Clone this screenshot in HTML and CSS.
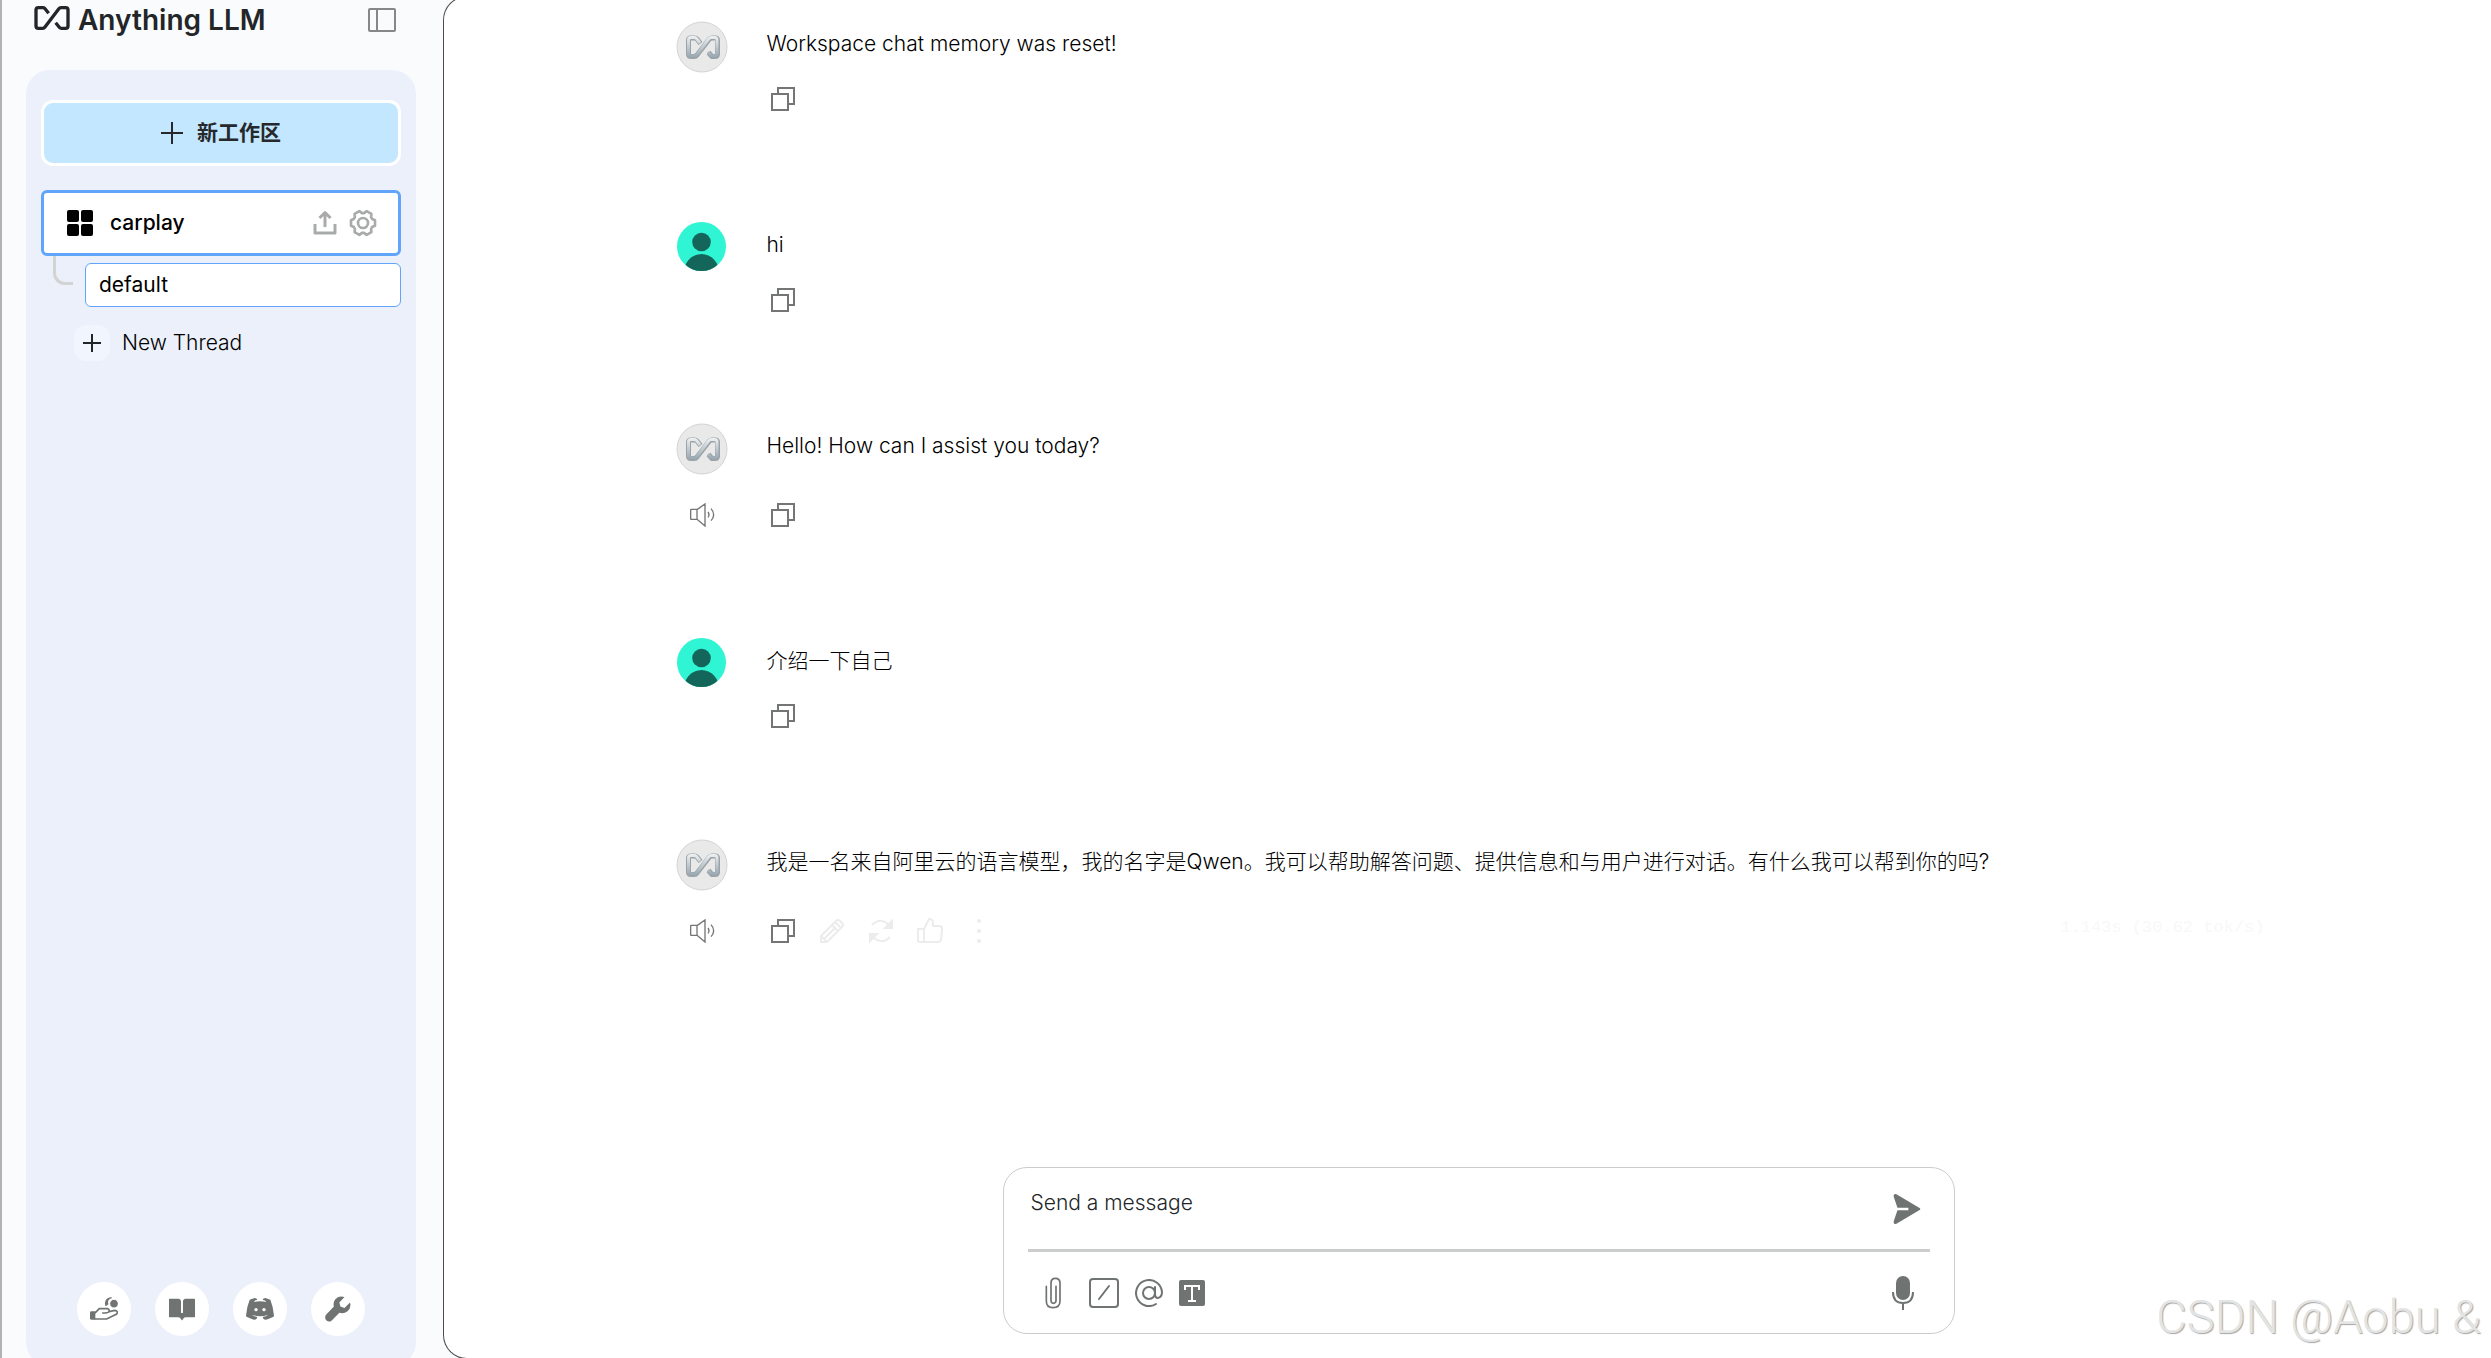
FILE: index.html
```html
<!DOCTYPE html>
<html lang="zh-CN">
<head>
<meta charset="utf-8">
<meta name="viewport" content="width=device-width, initial-scale=1">
<title>Anything LLM</title>
<link rel="stylesheet" href="styles.css">
</head>
<body>
<svg class="defs" aria-hidden="true">
  <defs>
    <linearGradient id="metal" gradientUnits="userSpaceOnUse" x1="0" y1="15" x2="0" y2="37"><stop offset="0" stop-color="#eef1f2"/><stop offset="1" stop-color="#93a5af"/></linearGradient>
    <symbol id="mark" viewBox="0 0 108 72"><path d="M44 22 32 7Q30 5 27 5H13Q6 5 6 12V60Q6 67 13 67H26Q30 67 33 63L74 9Q77 5 81 5H95Q102 5 102 12V60Q102 67 95 67H82Q79 67 77 65L65 50" fill="none" stroke-width="10"/></symbol>
    <symbol id="copy" viewBox="0 0 32 32"><path d="M11 11V5H27V21H21M5 11H21V27H5Z" fill="none" stroke="currentColor" stroke-width="2"/></symbol>
    <symbol id="speaker" viewBox="0 0 78 72"><path d="M5 20Q5 19 6 19H24V49H6Q5 49 5 48ZM24 20 48 3V69L24 49M57 27Q63 35 57 43M66 17Q82 35 66 53" fill="none" stroke="currentColor" stroke-width="4"/></symbol>
    <symbol id="bot" viewBox="0 0 52 52"><circle cx="26" cy="26" r="25" fill="#e9e9e9" stroke="#d4d4d4"/><g fill="none" stroke-linejoin="round"><path d="M24.500 22.500 21 18Q20 17 18.500 17H15Q12.500 17 12.500 19.500V33Q12.500 35.500 15 35.500H18Q20 35.500 21 34L33 18.500Q34 17 36 17H39Q41.500 17 41.500 19.500V33Q41.500 35.500 39 35.500H36L32.500 31.500" stroke="#7b8388" stroke-width="5" opacity=".7"/><path d="M24 22 20.500 17.500Q19.500 16.500 18 16.500H15Q12.500 16.500 12.500 19V32.500Q12.500 35 15 35H18Q20 35 21 33.500L32.500 18Q33.500 16.500 35.500 16.500H38.500Q41 16.500 41 19V32.500Q41 35 38.500 35H35.500L32 31" stroke="url(#metal)" stroke-width="3"/></g></symbol>
    <symbol id="user" viewBox="0 0 49 49"><clipPath id="round"><circle cx="24.500" cy="24.500" r="24.500"/></clipPath><g clip-path="url(#round)"><path d="M0 0H49V49H0Z" fill="#2ff5d4"/><circle cx="24.500" cy="20" r="9.300" fill="#15665a"/><ellipse cx="24.500" cy="52" rx="18" ry="20" fill="#15665a"/></g></symbol>
  </defs>
</svg>
<div class="app">
  <aside class="sidebar">
    <header class="brand">
      <a class="brand-link" href="#"><svg class="brand-mark" aria-hidden="true"><use href="#mark"/></svg><span>Anything LLM</span></a>
      <button class="icon-btn" type="button" aria-label="Toggle sidebar"><svg width="30" height="26" viewBox="0 0 30 26" fill="none" stroke="#858788" stroke-width="2"><rect x="2" y="2" width="26" height="22" rx="1"/><path d="M10 2V24"/></svg></button>
    </header>
    <div class="panel">
      <button class="new-workspace" type="button"><svg width="22" height="22" viewBox="0 0 22 22" stroke="#26282c" stroke-width="2"><path d="M11 0V22M0 11H22"/></svg><span>新工作区</span></button>
      <nav class="workspaces" aria-label="Workspaces">
        <div class="workspace">
          <svg width="26" height="26" viewBox="0 0 26 26" aria-hidden="true"><rect x="0" y="0" width="12" height="12" rx="2"/><rect x="14" y="0" width="12" height="12" rx="2"/><rect x="0" y="14" width="12" height="12" rx="2"/><rect x="14" y="14" width="12" height="12" rx="2"/></svg>
          <a class="workspace-name" href="#">carplay</a>
          <button class="icon-btn" type="button" aria-label="Upload"><svg width="24" height="26" viewBox="0 0 24 26" fill="none" stroke="#a9abab" stroke-width="3" stroke-linejoin="round"><path d="M2 14V23H22V14M12 17V3M6.500 8 12 2.500 17.500 8"/></svg></button>
          <button class="icon-btn" type="button" aria-label="Settings"><svg width="28" height="28" viewBox="-42 -42 84 84" fill="none" stroke="#a9abab" stroke-width="8" stroke-linejoin="round"><path d="M36 8.300 27.400 12.200 24.300 17.600 25.200 27.100 10.800 35.400 3.100 29.800H-3.100L-10.800 35.400-25.200 27.100-24.300 17.600-27.400 12.200-36 8.300V-8.300L-27.400-12.200-24.300-17.600-25.200-27.100-10.800-35.400-3.100-29.800H3.100L10.800-35.400 25.200-27.100 24.300-17.600 27.400-12.200 36-8.300Z"/><circle r="15"/></svg></button>
        </div>
        <div class="thread-row"><span class="branch"></span><a class="thread" href="#">default</a></div>
        <button class="new-thread" type="button"><span class="plus-tile"><svg width="18" height="18" viewBox="0 0 18 18" stroke="#222527" stroke-width="2"><path d="M9 0V18M0 9H18"/></svg></span><span>New Thread</span></button>
      </nav>
      <footer class="links">
        <a href="#" aria-label="Support"><svg width="28" height="24" viewBox="0 0 84 72"><path d="M46 27Q41 5 61 1Q68 0 65 4Q51 7 55 22Q50 28 46 27Z"/><circle cx="72" cy="20" r="13" stroke="#fff" stroke-width="3"/><path d="M2 43H16V68H4Q0 68 0 64V46Z"/><path d="M16 47 28 35H52Q59 37 57 43Q56 48 38 48M58 44 74 40Q86 42 80 51L50 66H16" fill="none" stroke="#6f7371" stroke-width="5" stroke-linecap="round"/></svg></a>
        <a href="#" aria-label="Documentation"><svg width="26" height="23" viewBox="0 0 80 68"><path d="M2 1H30Q36 2 37 8V45H43V8Q44 2 50 1H78Q80 1 80 3V56Q80 58 78 58H51Q45 58 43 64L40 68 37 64Q35 58 29 58H2Q0 58 0 56V3Q0 1 2 1Z"/></svg></a>
        <a href="#" aria-label="Discord"><svg width="28" height="22" viewBox="0 0 84 66"><path d="M11 5 26 0Q33 0 34 6Q26 6 23 12Q42 7 61 12Q58 6 50 6Q51 0 58 0L73 5Q82 27 84 53Q84 56 81 57L65 64Q57 67 52 62L50 57Q61 55 66 50Q42 59 18 50Q23 55 34 57L32 62Q27 67 19 64L3 57Q0 56 0 53Q2 27 11 5Z"/><circle cx="30" cy="35" r="5" fill="#fff"/><circle cx="54" cy="35" r="5" fill="#fff"/></svg></a>
        <a href="#" aria-label="Settings"><svg width="26" height="26" viewBox="0 0 76 76"><path d="M57 3Q40-3 29 11Q23 20 26 31L3 55Q-2 63 3 70Q11 78 19 72L42 49Q55 53 65 45Q78 34 73 19L57 35 45 31 42 19Z"/></svg></a>
      </footer>
    </div>
  </aside>
  <main class="main">
    <section class="chat" aria-label="Chat">
      <article class="message">
        <svg class="avatar" aria-hidden="true"><use href="#bot"/></svg>
        <p>Workspace chat memory was reset!</p>
        <div class="actions"><button class="icon-btn" type="button" aria-label="Copy"><svg width="32" height="32"><use href="#copy"/></svg></button></div>
      </article>
      <article class="message">
        <svg class="avatar user" aria-hidden="true"><use href="#user"/></svg>
        <p>hi</p>
        <div class="actions"><button class="icon-btn" type="button" aria-label="Copy"><svg width="32" height="32"><use href="#copy"/></svg></button></div>
      </article>
      <article class="message reply">
        <svg class="avatar" aria-hidden="true"><use href="#bot"/></svg>
        <p>Hello! How can I assist you today?</p>
        <button class="icon-btn speak" type="button" aria-label="Speak"><svg width="26" height="24"><use href="#speaker"/></svg></button>
        <div class="actions"><button class="icon-btn" type="button" aria-label="Copy"><svg width="32" height="32"><use href="#copy"/></svg></button></div>
      </article>
      <article class="message">
        <svg class="avatar user" aria-hidden="true"><use href="#user"/></svg>
        <p>介绍一下自己</p>
        <div class="actions"><button class="icon-btn" type="button" aria-label="Copy"><svg width="32" height="32"><use href="#copy"/></svg></button></div>
      </article>
      <article class="message reply">
        <svg class="avatar" aria-hidden="true"><use href="#bot"/></svg>
        <p>我是一名来自阿里云的语言模型，我的名字是Qwen。我可以帮助解答问题、提供信息和与用户进行对话。有什么我可以帮到你的吗?</p>
        <button class="icon-btn speak" type="button" aria-label="Speak"><svg width="26" height="24"><use href="#speaker"/></svg></button>
        <div class="actions">
          <button class="icon-btn" type="button" aria-label="Copy"><svg width="32" height="32"><use href="#copy"/></svg></button>
          <button class="icon-btn faded" type="button" aria-label="Edit"><svg width="32" height="32" viewBox="0 0 32 32"><path d="M5 21 20 6Q22 4 24 6L26 8Q28 10 26 12L11 27H5ZM16 10 22 16M19 7 25 13M8 24 19 13M5 21 11 27"/></svg></button>
          <button class="icon-btn faded" type="button" aria-label="Regenerate"><svg width="32" height="32" viewBox="0 0 32 32"><path d="M7 10Q15 2 23 9L26 12M25 22Q17 30 9 23L6 20"/><path class="solid" d="M27 6V13H20ZM5 26V19H12Z"/></svg></button>
          <button class="icon-btn faded" type="button" aria-label="Good response"><svg width="32" height="32" viewBox="0 0 32 32"><path d="M4 14H10V27H5Q4 27 4 26ZM10 14 15 4Q19 4 19 8V11H26Q29 12 28 15L27 25Q26 27 24 27H10"/></svg></button>
          <button class="icon-btn faded" type="button" aria-label="More actions"><svg width="32" height="32" viewBox="0 0 32 32"><g class="solid"><circle cx="16" cy="6" r="1"/><circle cx="16" cy="16" r="1"/><circle cx="16" cy="26" r="1"/></g></svg></button>
          <span class="timing">1.143s (30.62 tok/s)</span>
        </div>
      </article>
    </section>
    <form class="composer">
      <div class="entry">
        <textarea rows="1" aria-label="Message" placeholder="Send a message"></textarea>
        <button class="icon-btn" type="button" aria-label="Send"><svg width="28" height="30" viewBox="0 0 80 88"><path d="M3 1Q6-1 9 1L77 41Q81 44 77 47L9 87Q6 89 3 87Q0 84 1 80L12 48H44V40H12L1 8Q0 4 3 1Z" fill="#6f7371"/></svg></button>
      </div>
      <div class="tools">
        <button class="icon-btn" type="button" aria-label="Attach file"><svg width="16" height="32" viewBox="0 0 48 96" fill="none" stroke="#6f7371" stroke-width="5" stroke-linecap="round"><path d="M4 28V72Q4 92 24 92Q45 92 45 72V18Q45 4 31 4Q18 4 18 18V70Q18 79 25 79Q33 79 33 70V28"/></svg></button>
        <button class="icon-btn" type="button" aria-label="Slash commands"><svg width="30" height="30" viewBox="0 0 30 30" fill="none" stroke="#6f7371" stroke-width="2" stroke-linecap="round"><rect x="1" y="1" width="28" height="28" rx="3"/><path d="M10 21 20 8"/></svg></button>
        <button class="icon-btn" type="button" aria-label="Agents"><svg width="28" height="28" viewBox="0 0 28 28" fill="none" stroke="#6f7371" stroke-width="2" stroke-linecap="round"><circle cx="14" cy="14" r="6"/><path d="M20 8V15Q20 19 23 19Q27 18 27 13A13 13 0 1 0 21 25"/></svg></button>
        <button class="icon-btn" type="button" aria-label="Text size"><svg width="26" height="26" viewBox="0 0 26 26"><rect width="26" height="26" rx="2" fill="#6f7371"/><path d="M6 10V6H20V10M13 6V21M9 21H17" fill="none" stroke="#fff" stroke-width="2"/></svg></button>
        <button class="icon-btn mic" type="button" aria-label="Voice input"><svg width="24" height="34" viewBox="0 0 24 34"><rect x="5" y="0" width="14" height="24" rx="7" fill="#6f7371"/><path d="M2 16Q2 27 12 27Q22 27 22 16M12 27V34" fill="none" stroke="#6f7371" stroke-width="2"/></svg></button>
      </div>
    </form>
  </main>
</div>
<div class="watermark">CSDN @Aobu &amp;</div>
</body>
</html>
```
FILE: styles.css
```css
* { box-sizing: border-box; }
body {
  margin: 0;
  background: #fafbfd;
  color: #000;
  font: 300 21px/30px Inter, "Noto Sans CJK SC", sans-serif;
  overflow: hidden;
}
svg { display: block; flex: none; }
a { color: inherit; text-decoration: none; }
button {
  margin: 0;
  padding: 0;
  border: 0;
  background: none;
  color: inherit;
  font: inherit;
  cursor: pointer;
}
.defs { position: absolute; width: 0; height: 0; }
.icon-btn { display: grid; place-items: center; flex: none; }
.app {
  display: grid;
  grid-template-columns: 441px minmax(0, 1fr);
  height: 100vh;
  border-left: 2px solid #b2b2b4;
}

/* sidebar */
.sidebar { display: flex; flex-direction: column; padding: 0 27px 0 24px; min-height: 0; }
.brand {
  display: flex;
  align-items: center;
  justify-content: space-between;
  height: 70px;
  padding: 0 19px 30px 8px;
}
.brand-link {
  display: flex;
  align-items: center;
  gap: 8px;
  color: #222628;
  font-size: 28px;
  font-weight: 600;
}
.brand-mark { width: 36px; height: 24px; margin-bottom: 4px; stroke: #222628; }
.panel {
  display: flex;
  flex: 1;
  flex-direction: column;
  margin-bottom: -8px;
  padding: 30px 15px;
  border-radius: 24px;
  background: #ecf0fa;
}
.new-workspace {
  display: flex;
  align-items: center;
  justify-content: center;
  gap: 14px;
  height: 66px;
  border: 3px solid #fff;
  border-radius: 12px;
  background: #c2e7fe;
  color: #26282c;
  font-weight: 700;
}
.workspaces { display: flex; flex: 1; flex-direction: column; align-items: stretch; margin-top: 24px; }
.workspace {
  display: flex;
  align-items: center;
  gap: 12px;
  height: 66px;
  padding: 0 21px 0 23px;
  border: 3px solid #60a5fa;
  border-radius: 6px;
  background: #fff;
}
.workspace-name { flex: 1; padding-left: 5px; color: #000; font-weight: 500; }
.thread-row { display: flex; align-items: flex-start; padding-left: 12px; }
.branch {
  width: 20px;
  height: 29px;
  margin-right: 12px;
  border: solid #d2d3d3;
  border-width: 0 0 3px 3px;
  border-bottom-left-radius: 12px;
}
.thread {
  flex: 1;
  margin-top: 7px;
  padding: 6px 13px;
  border: 1px solid #60a5fa;
  border-radius: 6px;
  background: #fff;
  font-weight: 400;
}
.new-thread { display: flex; align-items: center; gap: 12px; margin: 18px 0 0 33px; }
.plus-tile {
  display: grid;
  place-items: center;
  width: 36px;
  height: 36px;
  border-radius: 12px;
  background: #f1f5fe;
}
.links { display: flex; justify-content: center; gap: 24px; }
.links a {
  display: grid;
  place-items: center;
  width: 54px;
  height: 54px;
  border-radius: 50%;
  background: #fff;
  fill: #6f7371;
}

/* conversation */
.main {
  display: flex;
  flex-direction: column;
  align-items: center;
  min-height: 0;
  margin-top: -4px;
  margin-bottom: -1px;
  padding: 24px 0 24px 22px;
  border: solid #4c4c4c;
  border-width: 1px 0 1px 1px;
  border-radius: 24px 0 0 24px;
  background: #fff;
}
.chat { flex: 1; width: 100%; max-width: 1606px; min-height: 0; }
.message {
  display: grid;
  grid-template-columns: 52px minmax(0, 1fr);
  grid-template-rows: 52px 32px;
  column-gap: 39px;
  row-gap: 10px;
  padding-bottom: 107px;
}
.message.reply { row-gap: 24px; }
.message p { margin: 8px 0 0; }
.avatar { width: 52px; height: 52px; }
.avatar.user { width: 49px; height: 49px; margin-left: 1px; }
.speak { color: #737675; }
.actions {
  display: flex;
  grid-column: 2;
  align-items: center;
  gap: 17px;
  color: #737675;
}
.faded svg { fill: none; stroke: #ececec; stroke-width: 2; }
.faded .solid { fill: #ececec; }
.timing {
  margin-left: auto;
  padding: 0 17px 6px 0;
  color: #f7f8f9;
  font: 400 17px/26px "Liberation Mono", monospace;
}

/* composer */
.composer {
  width: 952px;
  max-width: 96%;
  padding: 0 24px;
  border: 1px solid #cbcccc;
  border-radius: 24px;
  background: #fff;
}
.entry {
  display: flex;
  align-items: center;
  justify-content: space-between;
  height: 84px;
  padding: 0 9px 0 3px;
  border-bottom: 3px solid #cbcccc;
}
.entry textarea {
  flex: 1;
  height: 30px;
  margin-bottom: 12px;
  padding: 0;
  border: 0;
  outline: 0;
  background: none;
  color: inherit;
  font: inherit;
  resize: none;
}
.entry textarea::placeholder { color: #222628; opacity: 1; }
.tools { display: flex; align-items: center; gap: 16px; height: 81px; padding: 0 15px 0 17px; }
.tools .icon-btn:first-child { margin-right: 12px; }
.tools .mic { margin-left: auto; }

.watermark {
  position: absolute;
  right: 10px;
  bottom: 12px;
  color: #e3e4e4;
  font: 300 47px/58px Roboto, sans-serif;
  text-shadow: 1px 1px 1px #a5a5a5;
}
```
